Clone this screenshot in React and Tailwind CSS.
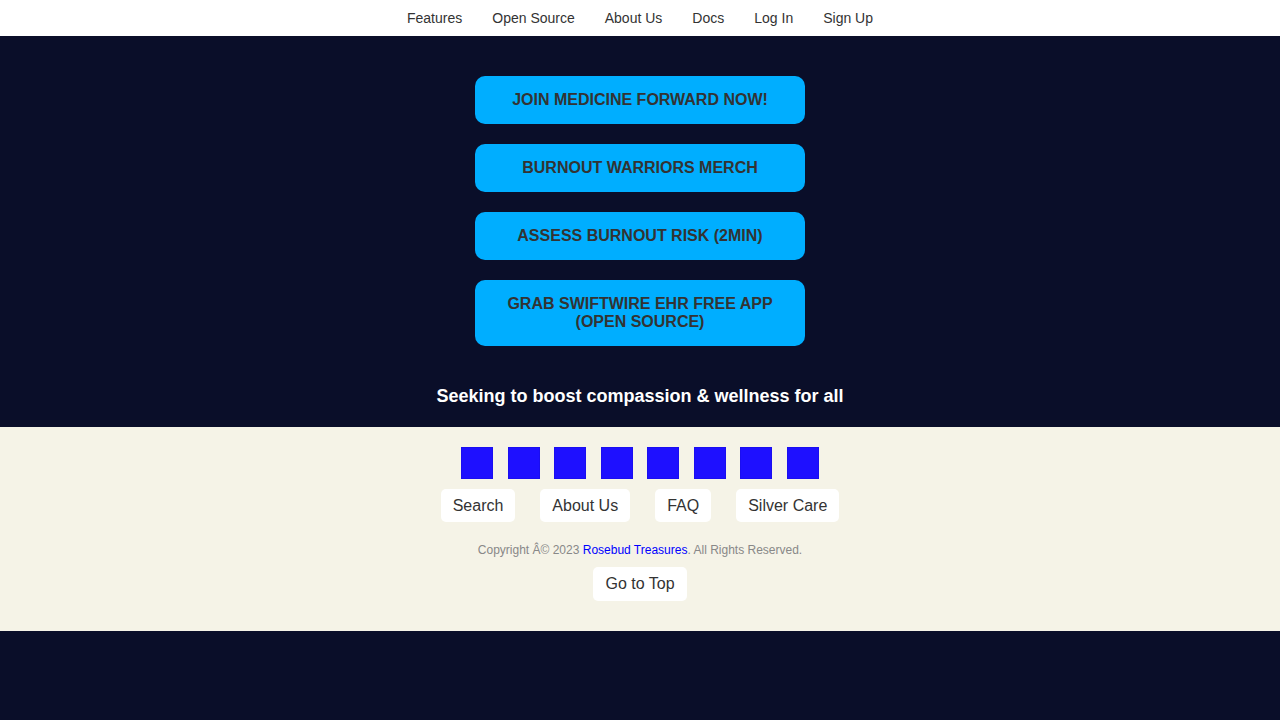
import React from "react";

const navLinks = ["Features", "Open Source", "About Us", "Docs", "Log In", "Sign Up"];

const ctas = [
  "Join Medicine Forward Now!",
  "Burnout Warriors Merch",
  "Assess Burnout Risk (2min)",
  "Grab SwiftWire EHR Free App (Open Source)",
];

const footerLinks = ["Search", "About Us", "FAQ", "Silver Care"];

const App = () => {
  return (
    <div className="min-h-[720px] bg-[#0a0e29] font-['Liberation_Sans',Arial,sans-serif]">
      {/* Top nav */}
      <nav className="h-9 bg-white flex items-center justify-center">
        {navLinks.map((label) => (
          <a key={label} href="#" className="px-[15px] text-sm text-[#333]">
            {label}
          </a>
        ))}
      </nav>

      {/* Hero */}
      <section className="pt-10 pb-[21px] flex flex-col items-center">
        <div className="flex flex-col gap-5">
          {ctas.map((label) => (
            <a
              key={label}
              href="#"
              className="w-[330px] py-[15px] px-8 rounded-[10px] bg-[#00aeff] text-[#333] text-base font-bold uppercase text-center leading-[18px]"
            >
              {label}
            </a>
          ))}
        </div>
        <p className="mt-10 text-lg leading-[20px] font-bold text-white">
          Seeking to boost compassion &amp; wellness for all
        </p>
      </section>

      {/* Footer */}
      <footer className="bg-[#f5f3e7] pt-5 pb-[30px] flex flex-col items-center">
        <div className="flex gap-[14.5px]">
          {Array.from({ length: 8 }).map((_, i) => (
            <div key={i} className="w-8 h-8 bg-[#1e10ff] border border-[#1a0ef0]" />
          ))}
        </div>
        <div className="mt-2.5 flex gap-[25px]">
          {footerLinks.map((label) => (
            <a key={label} href="#" className="bg-white rounded-[5px] px-3 py-[7px] text-base text-[#333] leading-[19px]">
              {label}
            </a>
          ))}
        </div>
        <p className="mt-[21px] text-xs leading-[14px] text-[#888]">
          Copyright Â© 2023 <a href="#" className="text-[#0000ff]">Rosebud Treasures</a>. All Rights Reserved.
        </p>
        <button className="mt-[10px] bg-white rounded-[5px] px-3 py-[7px] text-base text-[#333] leading-[20px]">
          Go to Top
        </button>
      </footer>
    </div>
  );
};

export default App;
